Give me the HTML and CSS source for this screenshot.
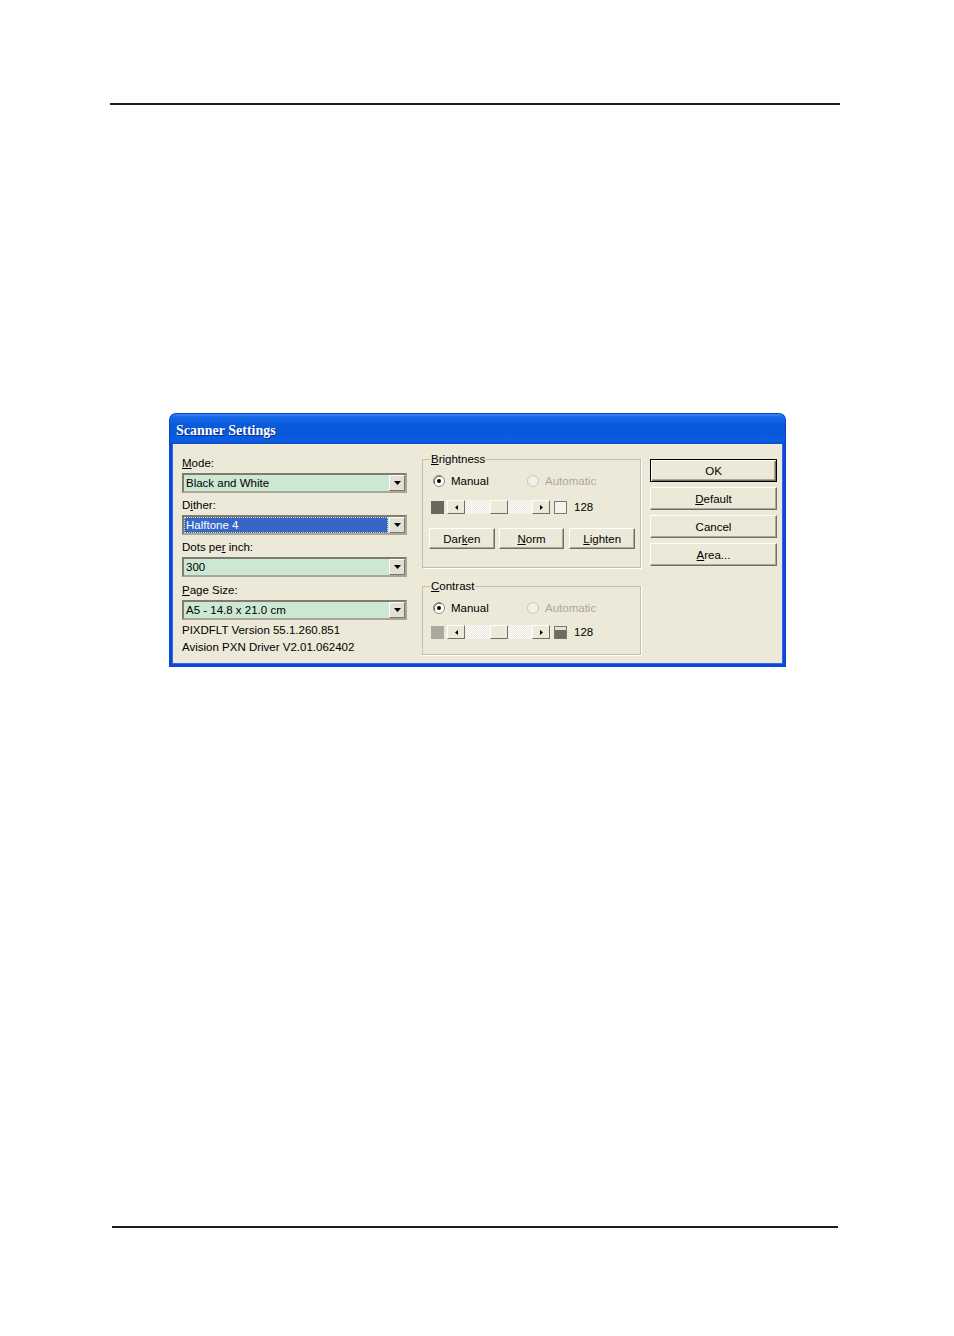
FILE: index.html
```html
<!DOCTYPE html>
<html>
<head>
<meta charset="utf-8">
<title>Scanner Settings</title>
<link rel="stylesheet" href="styles.css">
</head>
<body>
<div class="page">
  <div class="rule rule-top"></div>

  <div class="dialog">
    <div class="titlebar"><span class="title">Scanner Settings</span></div>
    <div class="client">

      <div class="col-left">
        <div class="field">
          <div class="label"><u>M</u>ode:</div>
          <div class="combo">
            <span class="combo-text">Black and White</span>
            <span class="combo-btn"><svg width="7" height="4" viewBox="0 0 7 4"><polygon points="0,0 7,0 3.5,4" fill="#000"/></svg></span>
          </div>
        </div>
        <div class="field">
          <div class="label">D<u>i</u>ther:</div>
          <div class="combo">
            <span class="combo-text selected">Halftone 4</span>
            <span class="combo-btn"><svg width="7" height="4" viewBox="0 0 7 4"><polygon points="0,0 7,0 3.5,4" fill="#000"/></svg></span>
          </div>
        </div>
        <div class="field">
          <div class="label">Dots pe<u>r</u> inch:</div>
          <div class="combo">
            <span class="combo-text">300</span>
            <span class="combo-btn"><svg width="7" height="4" viewBox="0 0 7 4"><polygon points="0,0 7,0 3.5,4" fill="#000"/></svg></span>
          </div>
        </div>
        <div class="field">
          <div class="label"><u>P</u>age Size:</div>
          <div class="combo">
            <span class="combo-text">A5 - 14.8 x 21.0 cm</span>
            <span class="combo-btn"><svg width="7" height="4" viewBox="0 0 7 4"><polygon points="0,0 7,0 3.5,4" fill="#000"/></svg></span>
          </div>
        </div>
        <div class="info first">PIXDFLT Version 55.1.260.851</div>
        <div class="info">Avision PXN Driver V2.01.062402</div>
      </div>

      <div class="col-mid">
        <fieldset class="group group-bright">
          <legend><u>B</u>rightness</legend>
          <div class="radios">
            <span class="radio-item radio-first">
              <svg class="radio" width="12" height="12" viewBox="0 0 12 12"><circle cx="6" cy="6" r="5.5" fill="#fff" stroke="#8E8B7E"/><path d="M1.8 8.5 A5 5 0 0 1 8.5 1.8" fill="none" stroke="#5E5C54"/><circle cx="6" cy="6" r="2" fill="#000"/></svg>
              <span>Manual</span>
            </span>
            <span class="radio-item disabled">
              <svg class="radio" width="12" height="12" viewBox="0 0 12 12"><circle cx="6" cy="6" r="5.5" fill="#F2F0E8" stroke="#C9C6B8"/></svg>
              <span>Automatic</span>
            </span>
          </div>
          <div class="slider-row">
            <span class="swatch swatch-dark"></span>
            <div class="scrollbar">
              <span class="sb-btn"><svg width="3" height="5" viewBox="0 0 3 5"><polygon points="3,0 3,5 0,2.5" fill="#000"/></svg></span>
              <span class="sb-track"><span class="sb-thumb"></span></span>
              <span class="sb-btn"><svg width="3" height="5" viewBox="0 0 3 5"><polygon points="0,0 0,5 3,2.5" fill="#000"/></svg></span>
            </div>
            <span class="preview preview-empty"></span>
            <span class="value">128</span>
          </div>
          <div class="btn-row">
            <button class="btn btn-small">Dar<u>k</u>en</button>
            <button class="btn btn-small"><u>N</u>orm</button>
            <button class="btn btn-small btn-last"><u>L</u>ighten</button>
          </div>
        </fieldset>

        <fieldset class="group group-contrast">
          <legend><u>C</u>ontrast</legend>
          <div class="radios">
            <span class="radio-item radio-first">
              <svg class="radio" width="12" height="12" viewBox="0 0 12 12"><circle cx="6" cy="6" r="5.5" fill="#fff" stroke="#8E8B7E"/><path d="M1.8 8.5 A5 5 0 0 1 8.5 1.8" fill="none" stroke="#5E5C54"/><circle cx="6" cy="6" r="2" fill="#000"/></svg>
              <span>Manual</span>
            </span>
            <span class="radio-item disabled">
              <svg class="radio" width="12" height="12" viewBox="0 0 12 12"><circle cx="6" cy="6" r="5.5" fill="#F2F0E8" stroke="#C9C6B8"/></svg>
              <span>Automatic</span>
            </span>
          </div>
          <div class="slider-row">
            <span class="swatch swatch-light"></span>
            <div class="scrollbar">
              <span class="sb-btn"><svg width="3" height="5" viewBox="0 0 3 5"><polygon points="3,0 3,5 0,2.5" fill="#000"/></svg></span>
              <span class="sb-track"><span class="sb-thumb"></span></span>
              <span class="sb-btn"><svg width="3" height="5" viewBox="0 0 3 5"><polygon points="0,0 0,5 3,2.5" fill="#000"/></svg></span>
            </div>
            <span class="preview preview-filled"></span>
            <span class="value">128</span>
          </div>
        </fieldset>
      </div>

      <div class="col-right">
        <button class="btn btn-side btn-default">OK</button>
        <button class="btn btn-side"><u>D</u>efault</button>
        <button class="btn btn-side">Cancel</button>
        <button class="btn btn-side"><u>A</u>rea...</button>
      </div>

    </div>
  </div>

  <div class="rule rule-bottom"></div>
</div>
</body>
</html>
```

FILE: styles.css
```css
html, body {
  margin: 0;
  padding: 0;
  background: #ffffff;
}

.page {
  width: 954px;
  height: 1336px;
  padding-top: 103px;
  box-sizing: border-box;
  overflow: hidden;
  font-family: "Liberation Sans", Arial, sans-serif;
  font-size: 11.5px;
  color: #000;
}

.rule {
  height: 2px;
  background: #1c1c1c;
}

.rule-top {
  margin-left: 110px;
  width: 730px;
}

.rule-bottom {
  margin-top: 559px;
  margin-left: 112px;
  width: 726px;
}

/* Dialog window */
.dialog {
  margin-top: 308px;
  margin-left: 169px;
  width: 617px;
}

.titlebar {
  height: 31px;
  box-sizing: border-box;
  padding: 3px 0 0 6px;
  display: flex;
  align-items: center;
  border-radius: 7px 7px 0 0;
  background: linear-gradient(to bottom,
    #3C8EF6 0%, #1469E8 10%, #0A5ADB 35%, #0957DA 65%, #0B5FE2 88%, #0A4ECB 100%);
  border: 1px solid #0A3EC8;
  border-bottom: 0;
}

.title {
  font-family: "Liberation Serif", "Times New Roman", serif;
  font-weight: bold;
  font-size: 14px;
  color: #ffffff;
  text-shadow: 1px 1px 0 #0A2A8A;
}

.client {
  height: 223px;
  box-sizing: border-box;
  background: #ECE9D8;
  border: 3px solid #0B47D8;
  border-top: 0;
  box-shadow: inset 1px 0 0 #2A6AE8, inset -1px 0 0 #2A6AE8, inset 0 -1px 0 #2A6AE8;
  padding: 0 6px 0 10px;
  display: flex;
  align-items: flex-start;
}

/* Left column */
.col-left {
  width: 225px;
  padding-top: 11px;
  display: flex;
  flex-direction: column;
}

.field {
  display: flex;
  flex-direction: column;
  margin-bottom: 4px;
}

.field:nth-child(4) {
  margin-top: 1px;
}

.label {
  height: 16px;
  line-height: 16px;
  margin-bottom: 2px;
  white-space: nowrap;
}

.combo {
  width: 225px;
  height: 20px;
  box-sizing: border-box;
  border: 2px solid;
  border-color: #7E7C71 #A9A799 #A9A799 #7E7C71;
  background: #CCE8D2;
  display: flex;
  align-items: stretch;
}

.combo-text {
  flex: 1;
  line-height: 16px;
  padding-left: 2px;
  white-space: nowrap;
}

.combo-text.selected {
  background: #3767C6;
  color: #ffffff;
  box-sizing: border-box;
  border: 1px dotted #E6DCA0;
  line-height: 14px;
  padding-left: 1px;
  margin-right: 1px;
}

.combo-btn {
  width: 16px;
  box-sizing: border-box;
  background: #E2DFD4;
  border: 1px solid;
  border-color: #FFFFFF #7A786C #7A786C #FFFFFF;
  display: flex;
  align-items: center;
  justify-content: center;
}

.info {
  height: 17px;
  line-height: 17px;
  white-space: nowrap;
}

.info.first {
  margin-top: -2px;
}

/* Middle column */
.col-mid {
  width: 219px;
  margin-left: 15px;
  padding-top: 8px;
  display: flex;
  flex-direction: column;
}

.group {
  margin: 0;
  width: 219px;
  box-sizing: border-box;
  border: 1px solid #C2BFAE;
  box-shadow: 1px 1px 0 #FFFFFF;
  padding: 7px 5px 18px 5px;
  min-width: 0;
}

.group legend {
  padding: 0 1px;
  margin-left: 2px;
  line-height: 14px;
  height: 14px;
  background: #ECE9D8;
}

.group-contrast {
  margin-top: 11px;
  padding-bottom: 15px;
}

.radios {
  height: 16px;
  display: flex;
  align-items: center;
}

.radio-item {
  display: flex;
  align-items: center;
  white-space: nowrap;
}

.radio-first {
  margin-left: 5px;
  width: 94px;
}

.radio {
  margin-right: 6px;
  flex: none;
}

.radio-item.disabled {
  color: #ACA899;
}

.slider-row {
  margin-top: 11px;
  height: 14px;
  display: flex;
  align-items: center;
}

.group-contrast .slider-row {
  margin-top: 9px;
}

.swatch {
  width: 13px;
  height: 13px;
  margin-left: 3px;
  flex: none;
}

.swatch-dark {
  background: #6B675C;
}

.swatch-light {
  background: #ABA89D;
}

.scrollbar {
  width: 103px;
  height: 14px;
  margin-left: 3px;
  display: flex;
  flex: none;
}

.sb-btn,
.sb-thumb {
  width: 18px;
  height: 14px;
  box-sizing: border-box;
  background: #ECE9D8;
  border: 1px solid;
  border-color: #FFFFFF #716F64 #716F64 #FFFFFF;
  display: flex;
  align-items: center;
  justify-content: center;
  flex: none;
}

.sb-track {
  flex: 1;
  height: 14px;
  background-color: #F7F6F1;
  background-image: repeating-conic-gradient(#ECEAE0 0 25%, #FBFAF7 0 50%);
  background-size: 2px 2px;
  display: flex;
}

.sb-thumb {
  margin-left: 25px;
}

.preview {
  width: 13px;
  height: 13px;
  box-sizing: border-box;
  margin-left: 4px;
  border: 1px solid #7B786C;
  flex: none;
}

.preview-empty {
  background: #F4F3EE;
}

.preview-filled {
  background: linear-gradient(to bottom, #E4E2D8 0 30%, #6E6B60 30% 100%);
}

.value {
  margin-left: 7px;
  line-height: 14px;
}

.btn-row {
  margin-top: 14px;
  display: flex;
  margin-left: 1px;
}

/* Buttons */
.btn {
  font-family: "Liberation Sans", Arial, sans-serif;
  font-size: 11.5px;
  color: #000;
  background: #ECE9D8;
  border: 1px solid;
  border-color: #FFFFFF #716F64 #716F64 #FFFFFF;
  box-shadow: inset -1px -1px 0 #ACA899;
  padding: 0;
  margin: 0;
  box-sizing: border-box;
  text-align: center;
}

.btn-small {
  width: 66px;
  height: 21px;
  margin-right: 4px;
}

.btn-small:nth-child(2) {
  margin-right: 5px;
}

.btn-last {
  margin-right: 0;
}

.col-right {
  width: 127px;
  margin-left: 9px;
  padding-top: 15px;
  display: flex;
  flex-direction: column;
}

.btn-side {
  width: 127px;
  height: 23px;
  margin-bottom: 5px;
}

.btn-default {
  border: 1px solid #000;
  box-shadow: inset 1px 1px 0 #FFFFFF, inset -1px -1px 0 #716F64, inset -2px -2px 0 #ACA899;
}
```
